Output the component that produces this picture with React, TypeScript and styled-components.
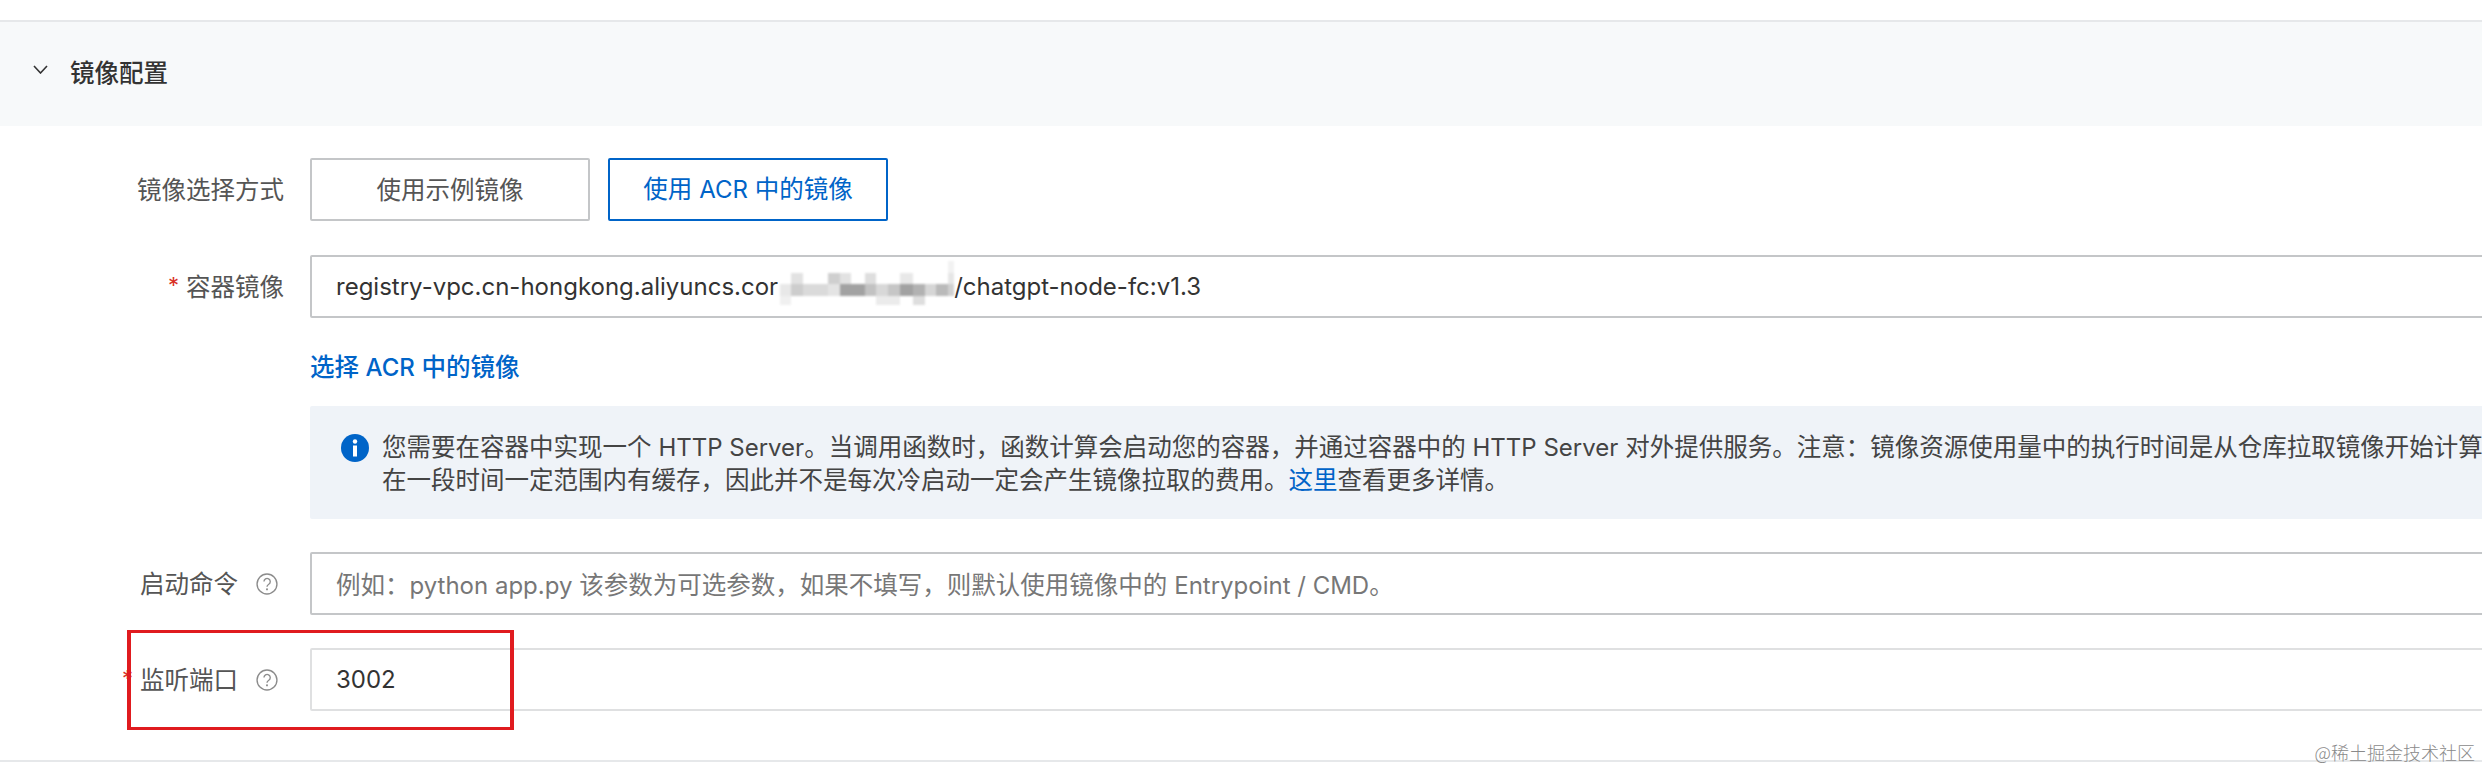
import React from "react";
import styled, { createGlobalStyle } from "styled-components";

const Global = createGlobalStyle`
  html, body { margin: 0; padding: 0; background: #fff; overflow: hidden; }
  body { font-family: Inter, "Noto Sans CJK SC", sans-serif; }
  * { box-sizing: border-box; }
`;

const Page = styled.div`
  position: relative;
  width: 2482px;
  height: 772px;
  padding-top: 20px;
  overflow: hidden;
`;

const SectionHeader = styled.div`
  height: 106px;
  border-top: 2px solid #e6e8ea;
  background: #f7f9fa;
  display: flex;
  align-items: center;
  padding: 0 0 2px 33px;
  gap: 22px;
`;

const SectionTitle = styled.h2`
  margin: 0;
  font-size: 24.5px;
  line-height: 32px;
  font-weight: 500;
  color: #333;
`;

const Chevron = styled.svg`
  width: 15px;
  height: 9px;
  margin-top: -7px;
  flex: none;
`;

const Form = styled.div`
  padding-top: 32px;
  display: flex;
  flex-direction: column;
`;

const Row = styled.div<{ $gap: number }>`
  position: relative;
  display: grid;
  grid-template-columns: 284px 2400px;
  column-gap: 26px;
  margin-bottom: ${(p) => p.$gap}px;
`;

const Label = styled.label`
  display: flex;
  align-items: center;
  justify-content: flex-end;
  font-size: 24.5px;
  line-height: 32px;
  color: #555;
  white-space: nowrap;
`;

const Star = styled.span`
  color: #d93026;
  font-size: 22px;
  line-height: 22px;
  margin-right: 7px;
  margin-top: -4px;
`;

const Help = styled.svg`
  width: 22px;
  height: 22px;
  margin: 0 6px 0 18px;
  flex: none;
`;

const Choices = styled.div`
  display: flex;
  gap: 18px;
`;

const Choice = styled.button<{ $active?: boolean }>`
  width: 280px;
  height: 63px;
  padding: 0;
  background: #fff;
  border-radius: 2px;
  border: ${(p) => (p.$active ? "2px solid #0064c8" : "2px solid #c4c6c8")};
  color: ${(p) => (p.$active ? "#0064c8" : "#555")};
  font-family: inherit;
  font-size: 24.5px;
  line-height: 32px;
`;

const Field = styled.div<{ $light?: boolean }>`
  height: 63px;
  display: flex;
  align-items: center;
  padding-left: 24px;
  background: #fff;
  border-radius: 2px;
  border: 2px solid ${(p) => (p.$light ? "#dfe0e1" : "#c4c6c8")};
  font-size: 24.5px;
  color: #333;
  white-space: nowrap;
`;

const Latin = styled.span`
  font-size: 24px;
`;

const Placeholder = styled.span`
  color: #777;
`;

const Mosaic = styled.svg`
  width: 176px;
  height: 52px;
  flex: none;
  filter: blur(0.8px);
`;

const Link = styled.a`
  grid-column: 2;
  font-size: 24.5px;
  line-height: 28px;
  font-weight: 500;
  color: #0064c8;
`;

const Alert = styled.div`
  grid-column: 2;
  height: 113px;
  display: flex;
  gap: 13px;
  padding: 25px 0 0 31px;
  background: #eff3f8;
  border-radius: 2px;
`;

const AlertIcon = styled.svg`
  width: 28px;
  height: 28px;
  margin-top: 3px;
  flex: none;
`;

const AlertText = styled.div`
  font-size: 24.5px;
  line-height: 32px;
  color: #444;
  white-space: nowrap;
`;

const InlineLink = styled.a`
  color: #0064c8;
`;

const Highlight = styled.div`
  position: absolute;
  left: 127px;
  top: -18px;
  width: 387px;
  height: 100px;
  border-style: solid;
  border-width: 3px 4px;
  border-color: #e01b1f;
  pointer-events: none;
`;

const BottomLine = styled.div`
  height: 2px;
  background: #e6e8ea;
  margin-top: 49px;
`;

const Watermark = styled.div`
  position: absolute;
  right: 7px;
  bottom: 8px;
  font-size: 18px;
  line-height: 24px;
  font-weight: 300;
  color: #8a8a8a;
  font-family: "Noto Sans CJK SC", sans-serif;
`;

const HelpIcon = () => (
  <Help viewBox="0 0 21 21" fill="none">
    <circle cx="10.5" cy="10.5" r="9.5" stroke="#8c8c8c" strokeWidth="1.3" />
    <path d="M7.6 8.2a3 3 0 1 1 4.6 2.5c-1.1.7-1.7 1.2-1.7 2.5" stroke="#8c8c8c" strokeWidth="1.3" />
    <circle cx="10.5" cy="15.6" r="1" fill="#8c8c8c" />
  </Help>
);

const tiles: [number, number, number, number, string][] = [
  [13, 12, 12, 12, "#e2e2e2"], [50, 12, 12, 12, "#cfcfcf"], [62, 12, 11, 12, "#e2e2e2"],
  [87, 12, 11, 12, "#dedede"], [122, 12, 13, 12, "#e8e8e8"], [170, 0, 6, 12, "#f2f2f2"],
  [170, 12, 6, 12, "#e6e6e6"],
  [2, 23, 11, 12, "#e8e8e8"], [13, 23, 12, 12, "#cdcdcd"], [25, 23, 25, 12, "#dadada"],
  [50, 23, 12, 12, "#e4e4e4"], [62, 23, 25, 12, "#a2a2a2"], [87, 23, 11, 12, "#c2c2c2"],
  [98, 23, 12, 12, "#d8d8d8"], [110, 23, 12, 12, "#c6c6c6"], [122, 23, 13, 12, "#a2a2a2"],
  [135, 23, 12, 12, "#b2b2b2"], [147, 23, 11, 12, "#d6d6d6"], [158, 23, 12, 12, "#bababa"],
  [170, 23, 6, 12, "#d0d0d0"],
  [2, 35, 11, 9, "#f0f0f0"], [98, 35, 24, 9, "#ebebeb"], [135, 35, 12, 9, "#dedede"],
];

const App = () => (
  <Page>
    <Global />
    <SectionHeader>
      <Chevron viewBox="0 0 15 9" fill="none">
        <path d="M1 1l6.5 7L14 1" stroke="#333" strokeWidth="1.6" />
      </Chevron>
      <SectionTitle>镜像配置</SectionTitle>
    </SectionHeader>
    <Form>
      <Row $gap={34}>
        <Label>镜像选择方式</Label>
        <Choices>
          <Choice>使用示例镜像</Choice>
          <Choice $active>使用 <Latin>ACR</Latin> 中的镜像</Choice>
        </Choices>
      </Row>
      <Row $gap={35}>
        <Label>
          <Star>*</Star>容器镜像
        </Label>
        <Field>
          <Latin>registry-vpc.cn-hongkong.aliyuncs.cor</Latin>
          <Mosaic viewBox="0 0 176 52">
            {tiles.map(([x, y, w, h, c], i) => (
              <rect key={i} x={x} y={y} width={w} height={h} fill={c} />
            ))}
          </Mosaic>
          <Latin>/chatgpt-node-fc:v1.3</Latin>
        </Field>
      </Row>
      <Row $gap={24}>
        <Link>选择 <Latin>ACR</Latin> 中的镜像</Link>
      </Row>
      <Row $gap={33}>
        <Alert>
          <AlertIcon viewBox="0 0 28 28">
            <circle cx="14" cy="14" r="14" fill="#0064c8" />
            <circle cx="14" cy="7.5" r="2.2" fill="#fff" />
            <rect x="12" y="11.5" width="4" height="11" fill="#fff" />
          </AlertIcon>
          <AlertText>
            您需要在容器中实现一个 <Latin>HTTP Server</Latin>。当调用函数时，函数计算会启动您的容器，并通过容器中的 <Latin>HTTP Server</Latin> 对外提供服务。注意：镜像资源使用量中的执行时间是从仓库拉取镜像开始计算的，
            <br />
            在一段时间一定范围内有缓存，因此并不是每次冷启动一定会产生镜像拉取的费用。<InlineLink>这里</InlineLink>查看更多详情。
          </AlertText>
        </Alert>
      </Row>
      <Row $gap={33}>
        <Label>
          启动命令
          <HelpIcon />
        </Label>
        <Field>
          <Placeholder>例如：<Latin>python app.py</Latin> 该参数为可选参数，如果不填写，则默认使用镜像中的 <Latin>Entrypoint / CMD</Latin>。</Placeholder>
        </Field>
      </Row>
      <Row $gap={0}>
        <Label>
          <Star>*</Star>监听端口
          <HelpIcon />
        </Label>
        <Field $light><Latin>3002</Latin></Field>
        <Highlight />
      </Row>
      <BottomLine />
    </Form>
    <Watermark>@稀土掘金技术社区</Watermark>
  </Page>
);

export default App;
